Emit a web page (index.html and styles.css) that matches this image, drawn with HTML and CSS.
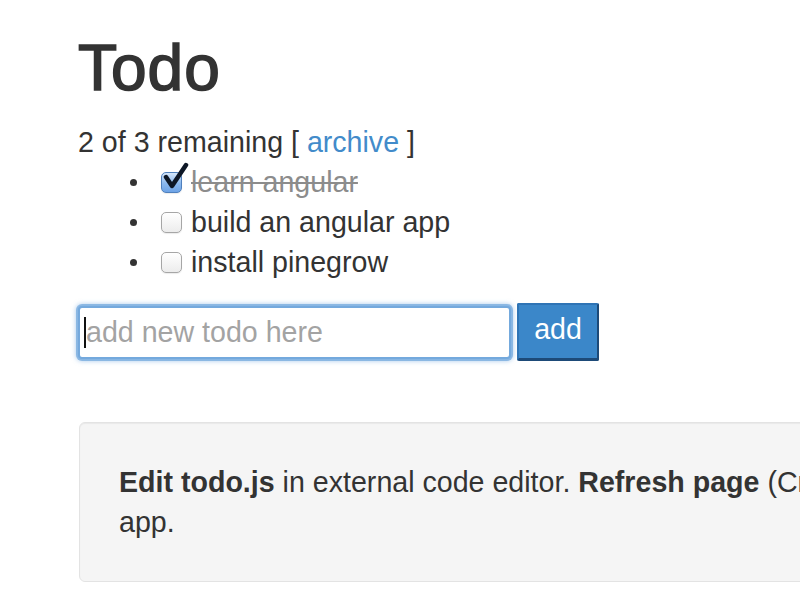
FILE: index.html
```html
<!DOCTYPE html>
<html>
<head>
<meta charset="utf-8">
<title>Todo</title>
<link rel="stylesheet" href="styles.css">
</head>
<body>
<div class="container">
  <h1 class="title">Todo</h1>
  <p class="summary">2 of 3 remaining [ <a href="#" class="link">archive</a> ]</p>
  <ul class="todos">
    <li class="todo">
      <span class="cb cb-checked">
        <svg class="tick" width="26" height="28" viewBox="0 0 26 28"><path d="M3 15 L9 24 L23 3" fill="none" stroke="#0d1726" stroke-width="4.5" stroke-linecap="round" stroke-linejoin="round"/></svg>
      </span>
      <span class="done">learn angular</span>
    </li>
    <li class="todo"><span class="cb"></span><span>build an angular app</span></li>
    <li class="todo"><span class="cb"></span><span>install pinegrow</span></li>
  </ul>
  <form class="add-form">
    <div class="field">
      <input class="input" type="text" placeholder="add new todo here">
      <span class="caret"></span>
    </div>
    <button class="btn" type="button">add</button>
  </form>
  <div class="well">
    <b>Edit todo.js</b> in external code editor. <b>Refresh page</b> (Cmd+R) to see the changes in the app.
  </div>
</div>
</body>
</html>
```
FILE: styles.css
```css
html, body {
  margin: 0;
  padding: 0;
  overflow: hidden;
  background: #fff;
}
body {
  font-family: "Liberation Sans", Arial, Helvetica, sans-serif;
  font-size: 28.6px;
  line-height: 40px;
  color: #333;
}
.container {
  padding-left: 78px;
}
.title {
  margin: 33px 0 0;
  font-size: 64px;
  line-height: 70px;
  font-weight: 400;
  letter-spacing: 1px;
  -webkit-text-stroke: 1.6px #333;
  color: #333;
}
.summary {
  margin: 19px 0 0;
}
.link {
  color: #428bca;
  text-decoration: none;
}
.todos {
  list-style: none;
  margin: 0;
  padding: 0;
}
.todo {
  display: flex;
  align-items: center;
  height: 40px;
}
.todo::before {
  content: "";
  width: 7px;
  height: 7px;
  border-radius: 50%;
  background: #333;
  margin-left: 52px;
  margin-right: 24px;
}
.cb {
  position: relative;
  box-sizing: border-box;
  width: 21px;
  height: 21px;
  margin-right: 9px;
  border: 1px solid #a6a6a6;
  border-radius: 5px;
  background: linear-gradient(#ffffff, #ececec);
  box-shadow: 0 1px 1px rgba(0,0,0,0.08);
}
.cb-checked {
  border-color: #4f80bd;
  background: linear-gradient(#d5e6fa, #8ab8ee 55%, #6da3e6);
}
.tick {
  position: absolute;
  left: 1px;
  top: -11px;
}
.done {
  color: #8c8c8c;
  text-decoration: line-through;
}
.add-form {
  display: flex;
  align-items: center;
  gap: 6px;
  margin: 21px 0 0;
}
.field {
  position: relative;
}
.input {
  box-sizing: border-box;
  display: block;
  width: 433px;
  height: 53px;
  margin: 0;
  padding: 0 6px;
  font-family: inherit;
  font-size: 28.6px;
  color: #333;
  border: 2px solid #74a9dd;
  border-radius: 4px;
  background: #fff;
  outline: none;
  box-shadow: 0 0 0 2px rgba(116, 169, 221, 0.75), 0 0 5px 2px rgba(102, 160, 220, 0.55);
}
.input::placeholder {
  color: #a3a3a3;
}
.caret {
  position: absolute;
  left: 6px;
  top: 11px;
  width: 2px;
  height: 31px;
  background: #111;
}
.btn {
  box-sizing: border-box;
  width: 82px;
  height: 58px;
  padding: 0 0 4px;
  font-family: inherit;
  font-size: 28.6px;
  color: #fff;
  background: #3b87c9;
  border: 2px solid #2f74b5;
  border-right-color: #1d4a78;
  border-bottom: 3px solid #1d4a78;
  border-radius: 2px;
}
.well {
  box-sizing: border-box;
  width: 1200px;
  margin: 61px 0 0 1px;
  padding: 39px;
  background: #f5f5f5;
  border: 1px solid #e3e3e3;
  border-radius: 6px;
  box-shadow: inset 0 1px 1px rgba(0,0,0,0.05);
}
```
